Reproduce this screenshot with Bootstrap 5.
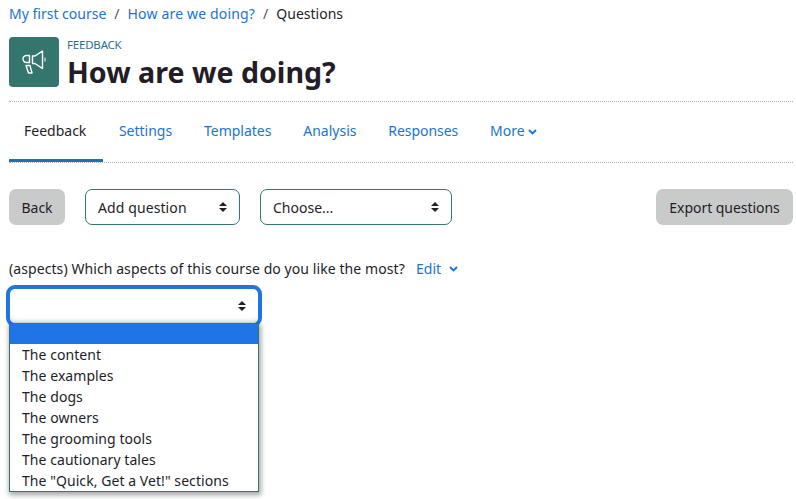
<!DOCTYPE html>
<html lang="en">
<head>
<meta charset="utf-8">
<meta name="viewport" content="width=device-width, initial-scale=1">
<title>How are we doing?</title>
<link href="https://cdn.jsdelivr.net/npm/bootstrap@5.3.0/dist/css/bootstrap.min.css" rel="stylesheet">
<style>
:root{--blue:#1b74cf;--teal:#34766e;--ink:#241d28}
body{font-family:"Noto Sans","Open Sans",sans-serif;font-size:14px;line-height:21px;color:var(--ink);background:#fff}
a{color:var(--blue);text-decoration:none}
.page{padding:3px 3px 0 9px}
.crumbs{--bs-breadcrumb-divider-color:#555;--bs-breadcrumb-item-padding-x:8px;--bs-breadcrumb-item-active-color:var(--ink);--bs-breadcrumb-font-size:14px;height:21px}
.crumbs .mid{letter-spacing:.17px}
.heading-row{margin-top:13px;height:65px;border-bottom:1px dotted #aab4b2}
.activity-icon{width:50px;height:50px;border-radius:4px;background:var(--teal)}
.kind{font-size:11.5px;line-height:16px;color:#2a7290;letter-spacing:-.2px}
h1{font-size:28.6px;line-height:38px;font-weight:700}
.tabs{height:61px;border-bottom:1px dotted #aab4b2}
.tabs .nav-link{padding:18px 15.900px 0;height:60px;color:var(--blue);line-height:22px;white-space:nowrap}
.tabs .nav-link.active{width:94px;padding-left:15px;padding-right:0;color:var(--ink);border-bottom:3px solid #226fb4}
.tabs .tight{letter-spacing:-.05px}
.tools{margin-top:26px;height:36px}
.tools .btn{height:36px;padding:0;font-size:14px;line-height:37px;background:#c9caca;border:0;border-radius:7px;color:var(--ink)}
.tools .back{width:56px}
.tools .export{width:137px;letter-spacing:-.05px}
.picker{height:36px;border:1px solid var(--teal);border-radius:7px;padding:0 12px}
.add{width:155px;margin-left:20px;letter-spacing:.1px}
.choose{width:192px;margin-left:20px}
.question{margin-top:33px}
.label-text{width:407px;letter-spacing:.08px;white-space:nowrap}
.answer{width:248px;height:34px;margin:10px 0 0 1px;border-radius:5px;padding:0 12px 0 0;box-shadow:0 0 0 4px #1f75e0,inset 0 -5px 5px -3px #dce8df}
.options{width:250px;height:169px;border:1px solid var(--teal);box-shadow:1px 2px 5px 1px rgba(40,60,55,.45);background:#fff;z-index:2}
.options li{height:21px;padding-left:12px;line-height:21px;white-space:nowrap;letter-spacing:.06px}
.options li.chosen{height:20px;background:#1f75e5}
</style>
<script src="https://cdn.jsdelivr.net/npm/bootstrap@5.3.0/dist/js/bootstrap.bundle.min.js"></script>
</head>
<body class="min-vh-100">
<svg class="d-none"><symbol id="updown" viewBox="0 0 8 10"><path d="M4 0 8 4H0zM0 6h8L4 10z" fill="#241d28"/></symbol>
<symbol id="chev" viewBox="0 0 9 6"><path d="M1 1l3.500 3.500L8 1" fill="none" stroke="#1b74da" stroke-width="1.900"/></symbol></svg>
<main class="page">
<nav><ol class="breadcrumb crumbs mb-0">
<li class="breadcrumb-item"><a href="#">My first course</a></li><li class="breadcrumb-item"><a href="#" class="mid">How are we doing?</a></li><li class="breadcrumb-item active">Questions</li></ol></nav>
<header class="heading-row d-flex">
<div class="activity-icon flex-shrink-0"><svg class="d-block" width="50" height="50" viewBox="0 0 50 50" fill="none" stroke="#fff" stroke-width="1.400" stroke-linejoin="round"><path d="M20.500 18.500h-3a3.500 3.500 0 0 0-3.500 3.500a3.500 3.500 0 0 0 3.500 3.500h3zM23.500 19h2.500l7.500-5v17.500l-7.500-5h-2.500zM17 28.500h4l2 7.500h-3.500z"/><path d="M36 20.500v4" stroke="#b5dcf3"/></svg></div>
<div class="ms-2"><div class="kind">FEEDBACK</div><h1 class="mb-0">How are we doing?</h1></div>
</header>
<ul class="nav tabs flex-nowrap">
<li class="nav-item"><a class="nav-link active" href="#">Feedback</a></li>
<li class="nav-item"><a class="nav-link" href="#">Settings</a></li>
<li class="nav-item"><a class="nav-link" href="#">Templates</a></li>
<li class="nav-item"><a class="nav-link" href="#">Analysis</a></li>
<li class="nav-item"><a class="nav-link tight" href="#">Responses</a></li>
<li class="nav-item"><a class="nav-link" href="#">More <svg width="9" height="6" class="align-middle"><use href="#chev"/></svg></a></li>
</ul>
<div class="tools d-flex">
<button class="btn back">Back</button>
<div class="picker add d-flex align-items-center justify-content-between"><span>Add question</span><svg width="8" height="10"><use href="#updown"/></svg></div>
<div class="picker choose d-flex align-items-center justify-content-between"><span>Choose...</span><svg width="8" height="10"><use href="#updown"/></svg></div>
<button class="btn export ms-auto">Export questions</button>
</div>
<div class="question d-flex"><span class="label-text">(aspects) Which aspects of this course do you like the most?</span><a href="#" class="d-flex align-items-center"><span>Edit</span><svg width="9" height="6" class="ms-2"><use href="#chev"/></svg></a></div>
<div class="answer d-flex align-items-center justify-content-end"><svg width="8" height="10"><use href="#updown"/></svg></div>
<ul class="options list-unstyled position-relative mb-0">
<li class="chosen"></li><li>The content</li><li>The examples</li><li>The dogs</li><li>The owners</li><li>The grooming tools</li><li>The cautionary tales</li><li>The "Quick, Get a Vet!" sections</li>
</ul>
</main>
</body>
</html>
